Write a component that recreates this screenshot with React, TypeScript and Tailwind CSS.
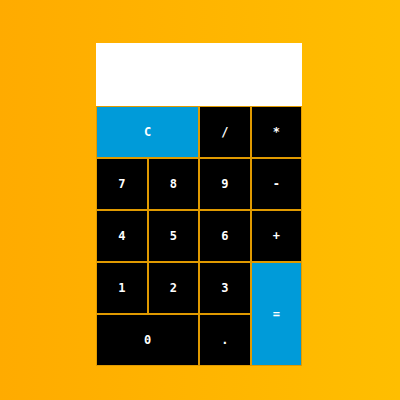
import React from "react";

export default function App() {
  const btn =
    "flex items-center justify-center border border-[#e09a00] text-white text-[12px] font-bold";
  const dark = "bg-black";
  const blue = "bg-[#009bd9]";
  return (
    <div className="w-[400px] h-[400px] bg-gradient-to-r from-[#ffab00] to-[#ffbe00] flex pl-[96px] pt-[43px]" style={{ fontFamily: '"DejaVu Sans Mono", monospace' }}>
      <div className="w-[206px] flex flex-col">
        <div className="h-[63px] bg-white" />
        <div className="grid grid-cols-4 grid-rows-[repeat(5,52px)]">
          <div className={`${btn} ${blue} col-span-2`}>C</div>
          <div className={`${btn} ${dark}`}>/</div>
          <div className={`${btn} ${dark}`}>*</div>
          <div className={`${btn} ${dark}`}>7</div>
          <div className={`${btn} ${dark}`}>8</div>
          <div className={`${btn} ${dark}`}>9</div>
          <div className={`${btn} ${dark}`}>-</div>
          <div className={`${btn} ${dark}`}>4</div>
          <div className={`${btn} ${dark}`}>5</div>
          <div className={`${btn} ${dark}`}>6</div>
          <div className={`${btn} ${dark}`}>+</div>
          <div className={`${btn} ${dark}`}>1</div>
          <div className={`${btn} ${dark}`}>2</div>
          <div className={`${btn} ${dark}`}>3</div>
          <div className={`${btn} ${blue} row-span-2`}>=</div>
          <div className={`${btn} ${dark} col-span-2`}>0</div>
          <div className={`${btn} ${dark}`}>.</div>
        </div>
      </div>
    </div>
  );
}
